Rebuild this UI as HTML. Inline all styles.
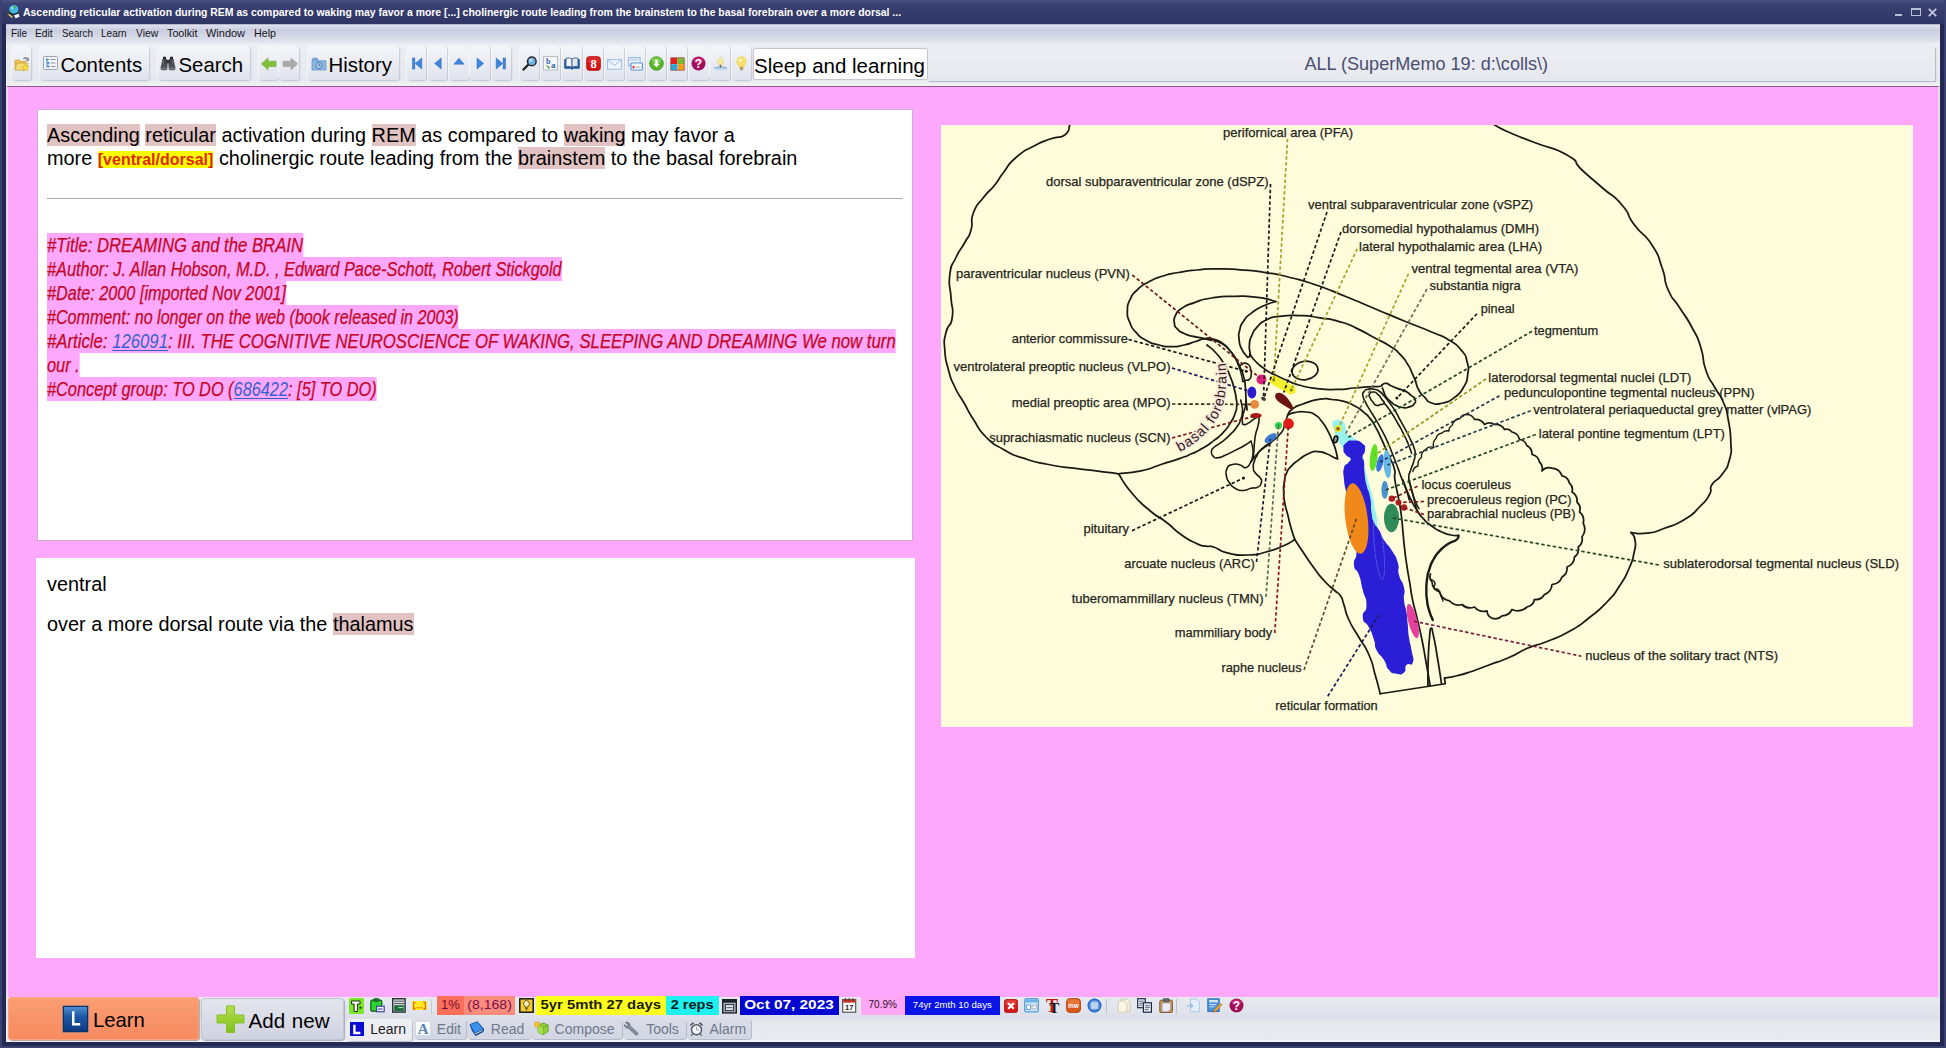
<!DOCTYPE html>
<html>
<head>
<meta charset="utf-8">
<title>SuperMemo</title>
<style>
*{box-sizing:border-box;margin:0;padding:0}
html,body{width:1946px;height:1048px;overflow:hidden}
body{position:relative;background:#242951;font-family:"Liberation Sans",sans-serif;color:#000}
.abs{position:absolute}
#titlebar{left:0;top:0;width:1946px;height:24px;background:linear-gradient(#4c5384 0px,#3b4173 4px,#343a6a 13px,#2f3563 24px)}
#title{left:23px;top:5px;font-size:11.8px;font-weight:bold;color:#fff;white-space:nowrap;transform-origin:0 0;transform:scaleX(0.8847)}
#menubar{left:6px;top:24px;width:1934px;height:19px;background:linear-gradient(#8d92b3 0,#dfe2ee 1px,#c9cdde 6px,#d4d7e5 12px,#e4e6ef 19px)}
#menubar span{position:absolute;top:3px;font-size:11.2px;color:#15151c;white-space:nowrap;transform-origin:0 0}
#toolbar{left:6px;top:43px;width:1934px;height:43px;background:linear-gradient(#eceef3 0,#e6e9f0 36px,#e9ebee 38px,#f2f3f5 43px)}
.tb{position:absolute;top:4px;height:33px;border-radius:3px;background:linear-gradient(#f4f5f9 0,#eceef4 40%,#e0e3ec 100%);box-shadow:1px 1px 1.5px #c3c6d2, -1px -1px 0 #f6f7fa}
.tbt{position:absolute;white-space:nowrap;font-size:20.4px;color:#000;top:11px;line-height:23px}
#client{left:6px;top:86px;width:1934px;height:911px;background:#fea8fd;border-left:2px solid #e6dcee;border-right:2px solid #e6dcee;border-top:1px solid #8a5a8c}
.panel{position:absolute;background:#fff}
#q{left:37px;top:109px;width:876px;height:432px;border:1px solid #cfaad4}
#q>*{margin-left:-1px;margin-top:-1px}
#a{left:36px;top:558px;width:879px;height:400px}
.txt{position:absolute;left:10px;white-space:nowrap;font-size:19.87px;line-height:23.6px}
.hl{background:#e2c3c3}
.cz{background:#ffff00;color:#e02800;font-weight:bold;font-size:16px}
.ref{position:absolute;left:10px;height:24px;line-height:25.4px;font-size:20px;font-style:italic;color:#c40626;-webkit-text-stroke:.25px #c40626;background:#fea8fd;white-space:nowrap;transform-origin:0 0;transform:scaleX(0.816)}
.ref a{color:#3560cc;text-decoration:underline;text-decoration-thickness:1px;text-underline-offset:2px;-webkit-text-stroke:0 transparent}
#imgbox{left:941px;top:125px;width:972px;height:602px;background:#fefcd9}
#bottombar{left:6px;top:997px;width:1934px;height:45px;background:linear-gradient(#e7e9ef 0,#e3e6ed 10px,#dcdfe8 21px,#e6e8f0 25px,#e7eaed 43px,#f2f3fa 43px,#f2f3fa 45px)}
.sx{display:inline-block}
</style>
</head>
<body>
<div id="titlebar" class="abs"></div>
<div class="abs" style="left:0;top:0;width:2px;height:1048px;background:#3a4170"></div>
<div class="abs" style="left:1944px;top:0;width:2px;height:1048px;background:#3a4170"></div>
<div class="abs" style="left:0;top:1046px;width:1946px;height:2px;background:#3a4170"></div>

<div id="title" class="abs">Ascending reticular activation during REM as compared to waking may favor a more [...] cholinergic route leading from the brainstem to the basal forebrain over a more dorsal ...</div>
<svg class="abs" style="left:6px;top:4px" width="16" height="16" viewBox="0 0 16 16"><circle cx="7.8" cy="5.6" r="4.6" fill="#3fb8e8"/><path d="M6 2.2 q2.5 -1 4 .8 q-.5 2 -2 2.4 q-1.6 -.6 -2 -3.2z" fill="#3fae5a"/><path d="M4.2 6.5 q1.4 .4 1.6 2.2 q-1 .6 -1.8 -.4z" fill="#3fae5a"/><circle cx="6.4" cy="4" r="1.3" fill="#bfeaff" opacity=".8"/><path d="M1.5 9.5 L6.5 13.5" stroke="#e8d84a" stroke-width="1.6"/><path d="M1 9 L2.6 10.4" stroke="#444" stroke-width="1.8"/><rect x="8.6" y="10" width="4.6" height="3.6" fill="#f4f6fa" transform="rotate(-25 10.9 11.8)"/><path d="M3 8.5 q4.5 3.5 9.5 0" stroke="#1a1a1a" stroke-width="1.2" fill="none"/></svg>
<div class="abs" style="left:1895px;top:14px;width:6.5px;height:2px;background:#b9bedb"></div>
<div class="abs" style="left:1911px;top:8px;width:9.5px;height:8px;border:1px solid #b9bedb;border-top-width:2px"></div>
<svg class="abs" style="left:1927.5px;top:7.5px" width="9" height="9" viewBox="0 0 9 9"><path d="M.8 .8L8.2 8.2M8.2 .8L.8 8.2" stroke="#c7cbe4" stroke-width="1.7"/></svg>
<div id="menubar" class="abs">
<span style="left:4.5px;transform:scaleX(0.887)">File</span><span style="left:29.0px;transform:scaleX(0.918)">Edit</span><span style="left:55.7px;transform:scaleX(0.869)">Search</span><span style="left:95.0px;transform:scaleX(0.898)">Learn</span><span style="left:129.7px;transform:scaleX(0.927)">View</span><span style="left:161.0px;transform:scaleX(0.962)">Toolkit</span><span style="left:200.0px;transform:scaleX(0.980)">Window</span><span style="left:248.0px;transform:scaleX(0.956)">Help</span>
</div>
<div id="toolbar" class="abs">
<div class="tb" style="left:6.0px;width:19.0px"></div>
<div class="tb" style="left:34.0px;width:109.3px"></div>
<div class="tb" style="left:151.7px;width:92.0px"></div>
<div class="tb" style="left:252.5px;width:19.3px"></div>
<div class="tb" style="left:273.3px;width:20.0px"></div>
<div class="tb" style="left:301.5px;width:91.8px"></div>
<div class="tb" style="left:400.9px;width:19.4px"></div>
<div class="tb" style="left:422.0px;width:19.4px"></div>
<div class="tb" style="left:443.2px;width:19.4px"></div>
<div class="tb" style="left:464.3px;width:19.4px"></div>
<div class="tb" style="left:485.5px;width:19.4px"></div>
<div class="tb" style="left:514.0px;width:19.4px"></div>
<div class="tb" style="left:535.1px;width:19.4px"></div>
<div class="tb" style="left:556.3px;width:19.4px"></div>
<div class="tb" style="left:577.5px;width:19.4px"></div>
<div class="tb" style="left:598.6px;width:19.4px"></div>
<div class="tb" style="left:619.8px;width:19.4px"></div>
<div class="tb" style="left:640.9px;width:19.4px"></div>
<div class="tb" style="left:662.0px;width:19.4px"></div>
<div class="tb" style="left:683.2px;width:19.4px"></div>
<div class="tb" style="left:704.4px;width:19.4px"></div>
<div class="tb" style="left:725.5px;width:19.4px"></div>
<div class="tbt" style="left:54.5px">Contents</div>
<div class="tbt" style="left:172.5px">Search</div>
<div class="tbt" style="left:322.5px">History</div>
<div class="abs" style="left:746.7px;top:5px;width:175px;height:31.5px;background:#fff;border:1px solid #c4c7d2;border-radius:2px"></div>
<div class="tbt" style="left:748px;top:10.6px;font-size:20.5px">Sleep and learning</div>
<div class="abs" style="left:922px;top:4px;width:1007px;height:34px;background:linear-gradient(#eceef3,#e6e8ef);box-shadow:1px 1px 1px #b9bcc8"></div>
<div class="abs" style="left:1298.4px;top:10.6px;font-size:18.1px;color:#4a4f70;white-space:nowrap">ALL (SuperMemo 19: d:\colls\)</div>
<svg class="abs" style="left:8.0px;top:12.0px" width="16" height="17" viewBox="0 0 16 17"><path d="M9 4 C10 1.5 13 1.5 14 3.5 L15 2.5 L15 6 L11.5 6 L12.8 4.6 C12 3.3 10.6 3.4 10 4.6Z" fill="#8d8f96"/>
<path d="M1 5.5 L1 15 L12 15 L12 6.5 L6.5 6.5 L5.5 5 L1.8 5Z" fill="#e9c04a" stroke="#c79a2a" stroke-width=".6"/>
<path d="M1 15 L3.2 8.2 L14 8.2 L12 15Z" fill="#f5d978" stroke="#c79a2a" stroke-width=".5"/>
<path d="M11.5 9.2 L12.5 11.4 L14.9 11.6 L13.1 13.2 L13.7 15.6 L11.5 14.3 L9.3 15.6 L9.9 13.2 L8.1 11.6 L10.5 11.4Z" fill="#ffe83a" stroke="#c9a000" stroke-width=".5"/></svg>
<svg class="abs" style="left:37.0px;top:13.0px" width="15" height="14" viewBox="0 0 15 14"><rect x=".5" y=".5" width="14" height="13" rx="1" fill="#f3f5f9" stroke="#9aa0ad"/>
<path d="M4 3.5v8M4 3.5h2M4 7h2M4 10.5h2" stroke="#4a83c6" stroke-width="1" fill="none"/>
<circle cx="4" cy="3.5" r="1.3" fill="#5b96d8"/><circle cx="5.5" cy="7" r="1.2" fill="#5b96d8"/><circle cx="5.5" cy="10.5" r="1.2" fill="#5b96d8"/>
<path d="M7.5 3.5h5M8 7h4.5M8 10.5h4.5" stroke="#8a8f9c" stroke-width="1.2"/></svg>
<svg class="abs" style="left:154.0px;top:13.0px" width="16" height="15" viewBox="0 0 16 15"><path d="M3 .8h3v2.4h-3zM10 .8h3v2.4h-3z" fill="#26262a"/><path d="M2.4 3h4.4l.9 7.2h-6.6zM9.2 3h4.4l1.3 7.2h-6.6z" fill="#45464c"/><rect x="6.4" y="3.8" width="3.2" height="3.6" fill="#2e2e33"/><rect x=".6" y="9.6" width="6.8" height="4.6" rx="1.4" fill="#55565d"/><rect x="8.6" y="9.6" width="6.8" height="4.6" rx="1.4" fill="#55565d"/><path d="M1.4 12.6h5.2M9.4 12.6h5.2" stroke="#8c8d94" stroke-width=".9"/><path d="M3.4 4.4v4.4M12.6 4.4v4.4" stroke="#77787f" stroke-width=".8"/></svg>
<svg class="abs" style="left:255.0px;top:13.5px" width="16" height="14" viewBox="0 0 16 14"><path d="M0.5 6.8 L7 1 L7 4.2 L15 4.2 L15 9.6 L7 9.6 L7 12.8Z" fill="#7fbf3a" stroke="#6aa82c" stroke-width=".6"/></svg>
<svg class="abs" style="left:276.0px;top:13.5px" width="16" height="14" viewBox="0 0 16 14"><path d="M15.5 6.8 L9 1 L9 4.2 L1 4.2 L1 9.6 L9 9.6 L9 12.8Z" fill="#a9a9a9" stroke="#9c9c9c" stroke-width=".6"/></svg>
<svg class="abs" style="left:304.5px;top:13.5px" width="16" height="14" viewBox="0 0 16 14"><path d="M1 3 L1 13 L15 13 L15 3.8 L7.5 3.8 L6.3 1.2 L2 1.2Z" fill="#7aa7d6" stroke="#5c8cc0" stroke-width=".7"/>
<rect x="1.4" y="4.6" width="13.2" height="8" fill="#8db7e2"/>
<circle cx="8" cy="8.5" r="3.2" fill="#a9cbee" stroke="#4c79ad" stroke-width=".9"/><path d="M8 6.6v2h1.6" stroke="#3d6596" stroke-width=".9" fill="none"/></svg>
<svg class="abs" style="left:404.6px;top:14.0px" width="12" height="13" viewBox="0 0 12 13"><rect x="1.5" y="1" width="2.4" height="11" fill="#3f86dc" stroke="#2a66b8" stroke-width=".5"/><path d="M10.8 1 L10.8 12 L4.2 6.5Z" fill="#3f86dc" stroke="#2a66b8" stroke-width=".5"/></svg>
<svg class="abs" style="left:425.7px;top:14.0px" width="12" height="13" viewBox="0 0 12 13"><path d="M9.2 1 L9.2 12 L2.6 6.5Z" fill="#3f86dc" stroke="#2a66b8" stroke-width=".5"/></svg>
<svg class="abs" style="left:446.9px;top:14.0px" width="12" height="13" viewBox="0 0 12 13"><path d="M0.8 7.2 L11.2 7.2 L6 1.2Z" fill="#3f86dc" stroke="#2a66b8" stroke-width=".5"/></svg>
<svg class="abs" style="left:468.0px;top:14.0px" width="12" height="13" viewBox="0 0 12 13"><path d="M3 1 L3 12 L9.6 6.5Z" fill="#3f86dc" stroke="#2a66b8" stroke-width=".5"/></svg>
<svg class="abs" style="left:489.2px;top:14.0px" width="12" height="13" viewBox="0 0 12 13"><rect x="8.1" y="1" width="2.4" height="11" fill="#3f86dc" stroke="#2a66b8" stroke-width=".5"/><path d="M1.2 1 L1.2 12 L7.8 6.5Z" fill="#3f86dc" stroke="#2a66b8" stroke-width=".5"/></svg>
<svg class="abs" style="left:515.7px;top:13.0px" width="16" height="15" viewBox="0 0 16 15"><path d="M1.5 13.5 L6.5 8.5" stroke="#222" stroke-width="2.4" stroke-linecap="round"/><circle cx="9.8" cy="5.4" r="4.3" fill="#6fb4ea" stroke="#2c2c30" stroke-width="1.5"/><circle cx="8.8" cy="4.3" r="1.6" fill="#b9defa"/></svg>
<svg class="abs" style="left:537.4px;top:13.0px" width="15" height="15" viewBox="0 0 15 15"><rect x=".5" y=".5" width="14" height="13.5" fill="#f6f7f4" stroke="#b8bcc4"/><text x="3" y="7.5" font-family="Liberation Serif" font-weight="bold" font-size="8" fill="#2a68b8">b</text><text x="8" y="12" font-family="Liberation Serif" font-weight="bold" font-size="9" fill="#2a68b8">a</text><path d="M3.5 9 q0 2.5 3 2.5 M5.2 10 l1.5 1.5 l-1.6 1.2" stroke="#3d9a3d" stroke-width=".9" fill="none"/></svg>
<svg class="abs" style="left:558.0px;top:14.0px" width="16" height="13" viewBox="0 0 16 13"><path d="M.8 2.2 L.8 11.2 L6.6 11.2 L8 12.4 L9.4 11.2 L15.2 11.2 L15.2 2.2" fill="#2a66a8" stroke="#1f4f8a" stroke-width="1"/><path d="M2 1.2 Q5.4 .2 8 2 L8 10.2 Q5.4 8.8 2 9.8Z" fill="#f2f5f8" stroke="#1f4f8a" stroke-width=".8"/><path d="M14 1.2 Q10.6 .2 8 2 L8 10.2 Q10.6 8.8 14 9.8Z" fill="#dfe6ee" stroke="#1f4f8a" stroke-width=".8"/></svg>
<svg class="abs" style="left:579.7px;top:13.0px" width="15" height="15" viewBox="0 0 15 15"><rect x=".5" y=".5" width="14" height="14" rx="3" fill="#d41414" stroke="#a90c0c" stroke-width=".6"/><rect x="1.5" y="1.2" width="12" height="6" rx="2.5" fill="#e63a3a" opacity=".55"/><text x="7.5" y="11.6" text-anchor="middle" font-family="Liberation Serif" font-weight="bold" font-size="12.5" fill="#fff">8</text></svg>
<svg class="abs" style="left:600.8px;top:15.5px" width="15" height="11" viewBox="0 0 15 11"><rect x=".6" y=".6" width="13.8" height="9.6" fill="#eef4fb" stroke="#9dbde2" stroke-width="1"/><path d="M1 1 L7.5 6.4 L14 1" fill="none" stroke="#9dbde2" stroke-width="1"/></svg>
<svg class="abs" style="left:622.0px;top:13.5px" width="15" height="14" viewBox="0 0 15 14"><rect x=".6" y=".6" width="11.5" height="8" fill="#e8f1fb" stroke="#8fb6e3" stroke-width="1"/><path d="M2 3.5l2-1.5 2 1.5 2-1.5 2 1.5" stroke="#8fb6e3" stroke-width=".8" fill="none"/><rect x="3" y="6" width="11.4" height="7" rx="1" fill="#fdfdfd" stroke="#5a96d6" stroke-width="1.2"/><rect x="4.5" y="9" width="2" height="2.4" fill="#d03030"/><path d="M7.5 10.2h5" stroke="#9aa" stroke-width="1"/></svg>
<svg class="abs" style="left:643.1px;top:13.0px" width="15" height="15" viewBox="0 0 15 15"><circle cx="7.5" cy="7.5" r="6.8" fill="#56b52a" stroke="#3c9418" stroke-width=".8"/><ellipse cx="7.5" cy="4.6" rx="4.8" ry="3" fill="#8ad862" opacity=".7"/><path d="M6.2 3.8h2.6v4h2L7.5 11.6 4.2 7.8h2z" fill="#fff"/></svg>
<svg class="abs" style="left:664.2px;top:13.5px" width="15" height="14" viewBox="0 0 15 14"><rect x=".8" y=".8" width="6.6" height="6.2" fill="#e02020"/><rect x="7.6" y=".8" width="6.6" height="6.2" fill="#7cba2c"/><rect x=".8" y="7.2" width="6.6" height="6" fill="#2aa6d8"/><rect x="7.6" y="7.2" width="6.6" height="6" fill="#f49a1a"/><rect x=".8" y=".8" width="13.4" height="12.4" fill="none" stroke="#8a3a2a" stroke-width=".6"/></svg>
<svg class="abs" style="left:685.4px;top:13.0px" width="15" height="15" viewBox="0 0 15 15"><circle cx="7.5" cy="7.5" r="7" fill="#a0105a"/><ellipse cx="7.5" cy="4.4" rx="5" ry="3.1" fill="#d02a7c" opacity=".75"/><text x="7.5" y="12" text-anchor="middle" font-family="Liberation Sans" font-weight="bold" font-size="12" fill="#fff">?</text></svg>
<svg class="abs" style="left:706.6px;top:13.0px" width="15" height="15" viewBox="0 0 15 15"><ellipse cx="7.5" cy="12.3" rx="7" ry="2" fill="#bcd6ef"/><path d="M1 12 q6.5 -3 13 0" stroke="#7fb0de" stroke-width="1" fill="none"/><path d="M7.5 .8 L10.4 4.5 q.8 3 -1.4 4.3 L6 8.8 q-2.2 -1.3 -1.4 -4.3z" fill="#f5eaa0" stroke="#d8c870" stroke-width=".5"/><rect x="6.8" y="8.8" width="1.4" height="3" fill="#7a6a3a"/></svg>
<svg class="abs" style="left:727.7px;top:13.0px" width="15" height="15" viewBox="0 0 15 15"><path d="M7.5 .8 a4.8 4.8 0 0 1 3 8.5 l-.6 1.6 h-4.8 l-.6 -1.6 a4.8 4.8 0 0 1 3 -8.5z" fill="#f7df6a" stroke="#e8c84a" stroke-width=".5"/><circle cx="6.3" cy="4.2" r="1.8" fill="#fdf3b5"/><rect x="5.8" y="10.9" width="3.4" height="2.4" fill="#b99a4a"/><rect x="6.5" y="13.3" width="2" height="1" fill="#8a7a4a"/></svg>
</div>
<div id="client" class="abs"></div>
<div id="q" class="panel">
<div class="txt" style="top:14.5px"><span class="hl">Ascending</span> <span class="hl">reticular</span> activation during <span class="hl">REM</span> as compared to <span class="hl">waking</span> may favor a</div>
<div class="txt" style="top:38px">more <span class="cz">[ventral/dorsal]</span> cholinergic route leading from the <span class="hl">brainstem</span> to the basal forebrain</div>
<div class="abs" style="left:10px;top:89px;width:856px;height:1px;background:#a8a8a8"></div>
<div class="ref" style="top:124px;transform:scaleX(0.835)">#Title: DREAMING and the BRAIN</div>
<div class="ref" style="top:148px">#Author: J. Allan Hobson, M.D. , Edward Pace-Schott, Robert Stickgold</div>
<div class="ref" style="top:172px;transform:scaleX(0.811)">#Date: 2000 [imported Nov 2001]</div>
<div class="ref" style="top:196px;transform:scaleX(0.805)">#Comment: no longer on the web (book released in 2003)</div>
<div class="ref" style="top:220px;transform:scaleX(0.837)">#Article: <a>126091</a>: III. THE COGNITIVE NEUROSCIENCE OF WAKING, SLEEPING AND DREAMING We now turn</div>
<div class="ref" style="top:244px">our .</div>
<div class="ref" style="top:268px">#Concept group: TO DO (<a>686422</a>: [5] TO DO)</div>
</div>
<div id="a" class="panel">
<div class="txt" style="top:14.5px;left:11px">ventral</div>
<div class="txt" style="top:54.5px;left:11px">over a more dorsal route via the <span class="hl">thalamus</span></div>
</div>
<!--BRAIN--><svg class="abs" style="left:941px;top:125px" width="972" height="602" viewBox="941 125 972 602">
<rect x="941" y="125" width="972" height="602" fill="#fefcda"/>
<g fill="none" stroke="#1a1a14" stroke-width="1.75" stroke-linecap="round" stroke-linejoin="round">
<path d="M1069.8 125.0C1068.1 128.3 1071.0 130.4 1064.8 135.0C1058.5 139.6 1061.4 135.0 1051.0 138.8C1040.6 142.5 1045.2 140.0 1033.5 146.2C1021.8 152.5 1026.0 148.8 1016.0 157.5C1006.0 166.2 1010.6 163.3 1003.5 172.5C996.4 181.7 1001.4 176.7 994.8 185.0C988.1 193.3 990.6 188.3 983.5 197.5C976.4 206.7 977.7 201.7 973.5 212.5C969.3 223.3 973.9 220.0 971.0 230.0C968.1 240.0 969.8 233.3 964.8 242.5C959.8 251.7 961.0 246.7 956.0 257.5C951.0 268.3 951.4 261.7 949.8 275.0C948.1 288.3 950.2 283.3 951.0 297.5C951.8 311.7 953.9 305.8 952.2 317.5C950.6 329.2 948.5 321.7 946.0 332.5C943.5 343.3 943.9 337.5 944.8 350.0C945.6 362.5 945.2 357.7 948.5 370.0C951.8 382.3 949.8 376.3 954.8 387.0C959.8 397.7 957.2 391.2 963.5 402.0C969.8 412.8 966.0 407.8 973.5 419.5C981.0 431.2 976.0 427.0 986.0 437.0C996.0 447.0 991.0 442.4 1003.5 449.5C1016.0 456.6 1008.5 453.2 1023.5 458.2C1038.5 463.2 1031.8 461.2 1048.5 464.5C1065.2 467.8 1057.7 466.2 1073.5 468.2C1089.3 470.3 1081.0 468.9 1096.0 470.8C1111.0 472.6 1111.0 472.8 1118.5 473.8"/>
<path d="M1118.5 473.8C1126.0 472.8 1126.8 473.8 1141.0 470.8C1155.2 467.7 1148.0 468.6 1161.0 464.5C1174.0 460.4 1169.8 462.0 1180.0 458.4C1190.2 454.8 1183.9 457.2 1191.5 453.8C1199.1 450.4 1195.3 452.7 1202.9 448.1C1210.5 443.5 1207.5 445.4 1214.4 440.1C1221.3 434.8 1218.2 437.8 1223.5 432.1C1228.8 426.4 1226.6 429.0 1230.4 422.9C1234.2 416.8 1232.9 419.4 1235.0 413.7C1237.1 408.0 1236.3 410.9 1236.7 405.7C1237.1 400.5 1237.0 403.9 1236.1 398.0C1235.2 392.1 1236.0 395.3 1234.0 388.0C1232.0 380.7 1233.3 384.0 1230.0 376.0C1226.7 368.0 1228.7 371.7 1224.0 364.0C1219.3 356.3 1221.7 359.3 1216.0 353.0C1210.3 346.7 1210.0 347.7 1207.0 345.0"/>
<path d="M1118.5 473.8C1122.7 479.8 1121.0 480.1 1131.0 492.0C1141.0 503.9 1136.8 499.5 1148.5 509.5C1160.2 519.5 1155.2 513.7 1166.0 522.0C1176.8 530.3 1171.0 527.4 1181.0 534.5C1191.0 541.6 1187.7 539.3 1196.0 543.2C1204.3 547.2 1200.2 545.0 1206.0 546.2C1211.8 547.5 1206.0 544.7 1213.5 547.0C1221.0 549.3 1216.8 550.6 1228.5 553.2C1240.2 555.9 1236.0 555.4 1248.5 555.0C1261.0 554.6 1254.3 555.1 1266.0 552.0C1277.7 548.9 1273.9 549.9 1283.5 545.8C1293.1 541.6 1291.0 541.6 1294.8 539.5"/>
<path d="M1494.5 125.0C1499.5 127.5 1496.2 126.7 1509.5 132.5C1522.8 138.3 1515.3 135.0 1534.5 142.5C1553.7 150.0 1551.2 145.8 1567.0 155.0C1582.8 164.2 1570.3 159.2 1582.0 170.0C1593.7 180.8 1588.7 175.8 1602.0 187.5C1615.3 199.2 1611.2 192.5 1622.0 205.0C1632.8 217.5 1624.5 211.7 1634.5 225.0C1644.5 238.3 1642.8 230.8 1652.0 245.0C1661.2 259.2 1656.6 252.5 1662.0 267.5C1667.4 282.5 1662.4 276.7 1668.2 290.0C1674.1 303.3 1671.6 295.0 1679.5 307.5C1687.4 320.0 1684.9 314.2 1692.0 327.5C1699.1 340.8 1696.2 333.3 1700.8 347.5C1705.3 361.7 1701.2 356.8 1705.8 370.0C1710.3 383.2 1708.7 376.3 1714.5 387.0C1720.3 397.7 1718.7 391.2 1723.2 402.0C1727.8 412.8 1725.8 406.2 1728.2 419.5C1730.8 432.8 1730.3 428.7 1730.8 442.0C1731.2 455.3 1732.4 448.7 1729.5 459.5C1726.6 470.3 1727.8 466.2 1722.0 474.5C1716.2 482.8 1716.2 477.8 1712.0 484.5C1707.8 491.2 1713.7 487.0 1709.5 494.5C1705.3 502.0 1707.8 498.7 1699.5 507.0C1691.2 515.3 1696.2 512.4 1684.5 519.5C1672.8 526.6 1677.0 523.7 1664.5 528.2C1652.0 532.8 1658.2 531.8 1647.0 533.2C1635.8 534.7 1636.3 532.8 1631.0 532.5"/>
<path d="M1631.0 532.5C1632.3 535.0 1634.0 533.2 1635.0 540.0C1636.0 546.8 1636.0 543.5 1634.0 553.0C1632.0 562.5 1633.8 557.5 1629.0 568.5C1624.2 579.5 1626.8 574.8 1619.5 586.0C1612.2 597.2 1617.0 591.5 1607.0 602.0C1597.0 612.5 1601.8 607.8 1589.5 617.5C1577.2 627.2 1584.2 623.0 1570.0 631.0C1555.8 639.0 1561.0 635.8 1547.0 641.5C1533.0 647.2 1540.7 642.7 1528.0 648.0C1515.3 653.3 1522.0 651.8 1509.0 657.5C1496.0 663.2 1501.5 660.3 1489.0 665.0C1476.5 669.7 1482.5 667.8 1471.5 671.5C1460.5 675.2 1465.0 673.8 1456.0 676.0C1447.0 678.2 1448.3 677.3 1444.5 678.0"/>
<path d="M1467.0 414.5Q1472.3 414.6 1474.5 419.5Q1481.1 418.8 1484.5 424.5Q1489.5 421.3 1494.5 424.5Q1501.1 423.8 1504.5 429.5Q1509.0 428.4 1512.0 432.0Q1518.2 433.4 1519.5 439.5Q1525.2 440.2 1527.0 445.8Q1532.3 448.5 1532.0 454.5Q1538.2 455.9 1539.5 462.0Q1543.5 465.6 1542.0 470.8Q1546.2 466.3 1552.0 468.2Q1559.4 468.8 1562.0 475.8Q1568.2 477.1 1569.5 483.2Q1573.5 486.8 1572.0 492.0Q1577.7 495.4 1577.0 502.0Q1581.5 506.2 1579.5 512.0Q1585.0 516.4 1583.2 523.2Q1587.0 530.5 1582.0 537.0Q1583.3 543.2 1578.2 547.0Q1579.6 553.2 1574.5 557.0Q1574.0 564.4 1567.0 567.0Q1567.7 573.6 1562.0 577.0Q1559.4 584.0 1552.0 584.5Q1551.5 591.9 1544.5 594.5Q1541.1 600.2 1534.5 599.5Q1533.2 605.6 1527.0 607.0Q1520.3 613.0 1512.0 609.5Q1509.0 615.8 1502.0 615.8Q1497.8 620.2 1492.0 618.2Q1487.1 616.1 1487.0 610.8Q1479.5 612.9 1474.5 607.0Q1467.5 609.8 1462.0 604.5Q1454.5 606.6 1449.5 600.8Q1441.7 599.6 1439.5 592.0Q1432.5 589.4 1432.0 582.0Q1428.7 578.5 1430.5 574.0"/>
<path d="M1287.7 414.9C1290.0 414.1 1288.4 413.6 1294.5 412.6C1300.6 411.6 1299.1 411.2 1306.0 412.0C1312.9 412.8 1309.9 411.6 1315.2 414.9C1320.5 418.2 1317.8 416.5 1322.0 421.8C1326.2 427.1 1324.3 424.4 1327.8 430.9C1331.3 437.4 1329.7 434.7 1332.4 441.2C1335.1 447.7 1334.1 444.5 1335.8 450.4C1337.5 456.3 1336.9 456.0 1337.5 458.8"/>
<path d="M1337.5 458.8C1336.2 458.3 1337.1 459.0 1333.5 457.3C1329.9 455.6 1331.9 455.7 1326.6 453.8C1321.3 451.9 1323.6 451.5 1317.5 451.5C1311.4 451.5 1314.4 451.1 1308.3 453.8C1302.2 456.5 1304.8 455.4 1299.1 459.6C1293.4 463.8 1295.3 461.8 1291.1 466.4C1286.9 471.0 1288.8 467.9 1286.5 473.3C1284.2 478.7 1285.1 476.4 1284.2 482.5C1283.3 488.6 1283.5 484.7 1283.7 491.6C1283.9 498.5 1283.5 495.5 1284.8 503.1C1286.1 510.7 1285.8 506.9 1287.7 514.5C1289.6 522.1 1288.2 517.7 1290.5 526.0C1292.8 534.3 1293.3 535.0 1294.8 539.5"/>
<path d="M1294.8 539.5C1297.8 544.2 1297.6 544.0 1304.0 553.5C1310.4 563.0 1307.3 559.0 1314.0 568.0C1320.7 577.0 1317.3 573.2 1324.0 580.5C1330.7 587.8 1328.6 585.0 1334.0 590.0C1339.4 595.0 1336.9 590.5 1340.2 595.5C1343.6 600.5 1341.1 596.8 1344.0 605.0C1346.9 613.2 1344.0 609.2 1349.0 620.0C1354.0 630.8 1352.3 625.8 1359.0 637.5C1365.7 649.2 1363.6 642.5 1369.0 655.0C1374.4 667.5 1371.5 662.1 1375.2 675.0C1379.0 687.9 1378.6 687.5 1380.2 693.8"/>
<path d="M1380.25 693.75 L1445.25 683.75 L1444.5 678"/>
<path d="M1287.7 414.9C1289.3 412.9 1287.4 412.6 1292.5 409.0C1297.6 405.4 1293.8 407.3 1303.0 404.0C1312.2 400.7 1310.5 400.7 1320.0 399.2C1329.5 397.7 1323.9 398.8 1331.5 399.5C1339.1 400.2 1335.3 399.1 1342.9 401.2C1350.5 403.3 1347.5 402.2 1354.4 405.8C1361.3 409.4 1358.2 407.7 1363.5 412.1C1368.8 416.5 1366.2 413.6 1370.4 418.9C1374.6 424.2 1372.7 422.0 1376.1 428.1C1379.5 434.2 1377.6 430.8 1380.7 437.3C1383.8 443.8 1382.2 440.7 1385.3 447.6C1388.4 454.5 1386.8 450.7 1389.9 457.9C1393.0 465.1 1392.8 461.9 1394.5 469.3C1396.2 476.7 1393.6 470.7 1394.9 480.0C1396.2 489.3 1396.2 485.7 1398.3 497.2C1400.4 508.7 1399.7 503.0 1401.2 514.4C1402.7 525.8 1401.8 520.1 1402.9 531.5C1404.0 542.9 1403.3 537.2 1404.6 548.7C1405.9 560.2 1405.2 554.4 1406.9 565.9C1408.6 577.4 1407.9 571.7 1409.8 583.1C1411.7 594.5 1410.2 588.4 1412.6 600.0C1415.0 611.6 1413.9 604.7 1417.0 618.0C1420.1 631.3 1419.0 625.3 1422.0 640.0C1425.0 654.7 1423.2 646.7 1426.0 662.0C1428.8 677.3 1428.8 678.0 1430.2 686.0"/>
<path d="M1409.3 500.0C1408.2 496.3 1408.6 496.3 1405.9 488.8C1403.2 481.3 1404.4 485.4 1401.3 477.4C1398.2 469.4 1399.7 472.8 1396.7 464.8C1393.7 456.8 1395.2 460.9 1392.2 453.3C1389.2 445.7 1391.0 449.5 1387.6 441.9C1384.2 434.3 1385.7 437.7 1381.9 430.4C1378.1 423.1 1379.9 426.6 1376.1 420.1C1372.3 413.6 1373.8 416.6 1370.4 410.9C1367.0 405.2 1368.3 407.9 1365.8 402.9C1363.3 397.9 1363.6 399.8 1363.0 396.0C1362.4 392.2 1362.4 393.8 1364.1 391.5C1365.8 389.2 1364.9 390.0 1368.1 389.2C1371.3 388.4 1370.0 388.4 1373.8 389.2C1377.6 390.0 1376.2 389.2 1379.6 391.5C1383.0 393.8 1381.1 392.6 1384.1 396.0C1387.1 399.4 1385.2 397.2 1388.7 401.8C1392.2 406.4 1390.7 403.7 1394.5 409.8C1398.3 415.9 1396.4 413.2 1400.2 420.1C1404.0 427.0 1402.5 423.9 1405.9 430.4C1409.3 436.9 1407.8 433.9 1410.5 439.6C1413.2 445.3 1412.4 442.6 1413.9 447.6C1415.4 452.6 1415.3 449.5 1415.1 454.5C1414.9 459.5 1414.9 457.2 1413.4 462.5C1411.9 467.8 1412.0 465.5 1410.5 470.5C1409.0 475.5 1408.8 472.4 1408.8 477.4C1408.8 482.4 1409.2 479.7 1410.5 485.4C1411.8 491.1 1410.7 486.5 1412.8 494.6C1414.9 502.7 1415.4 504.7 1416.7 509.8" stroke-width="1.6"/>
<path d="M1369.3 394.3C1370.4 392.2 1370.8 391.8 1373.8 392.0C1376.8 392.2 1375.7 392.4 1378.4 394.9C1381.1 397.4 1380.0 396.8 1381.9 399.5C1383.8 402.2 1384.5 401.2 1384.1 402.9C1383.7 404.6 1383.4 403.8 1380.7 404.6C1378.0 405.4 1378.8 406.1 1376.1 405.2C1373.4 404.3 1374.6 404.1 1372.7 401.8C1370.8 399.5 1371.5 400.8 1370.4 398.3C1369.3 395.8 1368.2 396.4 1369.3 394.3Z" stroke-width="1.6"/>
<path d="M1384.1 402.9C1386.4 405.9 1386.4 405.1 1391.0 412.0C1395.6 418.9 1393.7 416.2 1397.9 423.5C1402.1 430.8 1400.2 427.2 1403.6 434.0C1407.0 440.8 1405.5 437.6 1408.2 444.0C1410.9 450.4 1410.5 450.2 1411.6 453.3" stroke-width="1.6"/>
<path d="M1427.9 686.2C1428.0 677.5 1427.7 676.1 1428.2 660.0C1428.7 643.9 1428.6 648.5 1429.5 638.0C1430.4 627.5 1429.7 629.2 1431.0 628.5C1432.3 627.8 1431.5 627.2 1433.5 636.0C1435.5 644.8 1434.3 639.2 1437.0 655.0C1439.7 670.8 1440.0 674.0 1441.5 683.5"/>
<path d="M1402.9 480.0C1404.0 483.1 1403.6 482.7 1406.3 489.2C1409.0 495.7 1407.4 492.6 1410.9 499.5C1414.4 506.4 1412.5 503.3 1416.7 509.8C1420.9 516.3 1418.6 513.6 1423.5 518.9C1428.4 524.2 1425.8 521.6 1431.5 525.8C1437.2 530.0 1434.2 528.4 1440.7 531.5C1447.2 534.6 1445.1 533.6 1451.0 535.0C1456.9 536.4 1456.0 535.4 1458.5 535.6"/>
<path d="M1458.5 535.6C1457.9 536.9 1460.0 536.9 1456.7 539.6C1453.4 542.3 1454.0 540.2 1448.7 543.6C1443.4 547.0 1445.7 544.8 1440.7 549.9C1435.7 555.0 1437.6 552.5 1433.8 559.0C1430.0 565.5 1431.6 562.4 1429.3 569.3C1427.0 576.2 1428.0 572.8 1427.0 579.7C1426.0 586.6 1426.4 583.2 1426.4 590.0C1426.4 596.8 1426.1 593.3 1427.0 600.0C1427.9 606.7 1427.1 603.3 1429.0 610.0C1430.9 616.7 1431.5 616.7 1432.8 620.0" stroke-width="2.4"/>
<path d="M1408.6 480.0C1409.8 483.8 1409.8 484.2 1412.1 491.5C1414.4 498.8 1413.2 496.1 1415.5 501.8C1417.8 507.5 1417.8 506.3 1419.0 508.6" stroke-width="1.6"/>
<path d="M1467.0 414.5Q1462.2 414.3 1460.0 418.5Q1453.8 419.4 1452.0 425.5Q1448.7 427.3 1449.0 431.0Q1444.9 429.8 1442.0 433.0Q1437.2 433.8 1436.0 438.5Q1432.0 442.3 1433.8 447.5Q1429.4 445.8 1426.0 449.0Q1421.0 451.8 1421.5 457.5Q1417.0 460.6 1418.0 466.0Q1413.6 467.1 1412.8 471.6" stroke-width="1.4"/>
<path d="M1431.5 579.6C1432.7 580.7 1434.2 580.0 1435.0 583.0C1435.8 586.0 1432.8 586.2 1434.0 588.5C1435.2 590.8 1436.2 587.5 1438.5 590.0C1440.8 592.5 1439.5 592.3 1441.0 596.0C1442.5 599.7 1442.3 599.3 1443.0 601.0" stroke-width="1.4"/>
<path d="M1247.1 410.0C1246.7 406.3 1246.6 406.3 1246.0 398.8C1245.4 391.3 1246.2 394.6 1245.4 387.4C1244.6 380.2 1245.4 383.6 1243.7 377.1C1242.0 370.6 1243.0 374.0 1240.3 367.9C1237.6 361.8 1239.1 364.4 1235.7 358.7C1232.3 353.0 1234.2 355.7 1230.0 350.7C1225.8 345.7 1228.5 347.6 1223.1 343.8C1217.7 340.0 1220.0 341.0 1213.9 339.3C1207.8 337.6 1210.9 338.0 1204.8 338.7C1198.7 339.4 1202.5 339.4 1195.6 341.5C1188.7 343.6 1192.1 343.3 1184.1 345.0C1176.1 346.7 1179.9 346.7 1171.5 346.7C1163.1 346.7 1167.3 347.1 1158.9 345.0C1150.5 342.9 1153.9 344.6 1146.3 340.4C1138.7 336.2 1141.5 338.5 1136.0 332.4C1130.5 326.3 1132.6 329.4 1129.7 322.1C1126.8 314.8 1127.2 318.2 1127.4 310.6C1127.6 303.0 1127.0 306.1 1130.3 299.2C1133.6 292.3 1131.1 295.7 1137.2 290.0C1143.3 284.3 1139.9 286.7 1148.5 282.0C1157.1 277.3 1153.0 279.2 1163.0 276.0C1173.0 272.8 1167.2 274.5 1178.5 272.5C1189.8 270.5 1184.5 271.2 1197.0 270.0C1209.5 268.8 1201.7 269.0 1216.0 268.9C1230.3 268.8 1223.3 268.6 1240.0 269.8C1256.7 271.0 1249.3 270.0 1266.0 272.6C1282.7 275.2 1273.3 273.4 1290.0 277.5C1306.7 281.6 1297.4 278.7 1316.0 285.0C1334.6 291.3 1326.2 288.7 1345.7 296.5C1365.2 304.3 1355.3 300.5 1374.4 308.5C1393.5 316.5 1383.9 312.7 1403.0 320.5C1422.1 328.3 1416.3 325.5 1431.6 332.0C1446.9 338.5 1438.9 333.9 1448.8 340.0C1458.7 346.1 1455.3 343.1 1461.4 350.4C1467.5 357.7 1465.0 353.9 1467.1 361.9C1469.2 369.9 1468.8 366.1 1467.7 374.5C1466.6 382.9 1468.1 379.4 1463.7 387.0C1459.3 394.6 1461.4 392.1 1454.5 397.4C1447.6 402.7 1450.6 401.1 1443.0 403.0C1435.4 404.9 1437.7 404.9 1431.6 403.0C1425.5 401.1 1429.0 401.6 1424.8 397.4C1420.6 393.2 1422.1 395.9 1419.0 390.5C1415.9 385.1 1416.7 384.4 1415.6 381.3"/>
<path d="M1207.0 338.0C1210.5 339.2 1210.9 338.4 1217.4 341.5C1223.9 344.6 1221.2 342.7 1226.5 347.3C1231.8 351.9 1229.6 349.6 1233.4 355.3C1237.2 361.0 1235.3 358.0 1238.0 364.5C1240.7 371.0 1239.9 369.1 1241.4 374.8C1242.9 380.5 1242.2 379.3 1242.6 381.6" stroke-width="1.4"/>
<path d="M1275.8 301.5C1269.7 300.1 1271.3 299.1 1257.5 297.4C1243.7 295.7 1249.8 296.1 1234.5 296.3C1219.2 296.5 1224.9 295.9 1211.6 298.0C1198.3 300.1 1204.4 299.2 1194.5 302.6C1184.6 306.0 1188.2 304.1 1181.9 308.3C1175.6 312.5 1178.1 310.2 1175.6 315.2C1173.1 320.2 1173.8 318.6 1174.4 323.2C1175.0 327.8 1174.1 325.5 1177.3 328.9C1180.5 332.3 1178.8 331.0 1184.1 333.5C1189.4 336.0 1187.2 334.9 1193.3 336.4C1199.4 337.9 1196.4 336.8 1202.5 338.1C1208.6 339.4 1208.6 339.6 1211.6 340.4"/>
<path d="M1275.8 301.5C1271.6 303.0 1271.2 302.2 1263.2 306.0C1255.2 309.8 1258.2 307.9 1251.7 312.9C1245.2 317.9 1247.7 315.2 1243.7 320.9C1239.7 326.6 1241.2 324.0 1239.7 330.1C1238.2 336.2 1238.5 333.2 1239.1 339.3C1239.7 345.4 1239.1 343.1 1241.4 348.4C1243.7 353.7 1243.7 352.4 1246.0 355.3C1248.3 358.2 1247.0 357.4 1248.3 357.0C1249.6 356.6 1249.6 358.1 1250.0 354.1C1250.4 350.1 1248.8 351.1 1249.4 345.0C1250.0 338.9 1249.0 341.9 1251.7 335.8C1254.4 329.7 1252.5 332.0 1257.5 326.7C1262.5 321.4 1259.1 323.3 1266.6 319.8C1274.1 316.3 1268.9 317.7 1280.0 316.3C1291.1 314.9 1286.7 315.1 1300.0 315.6C1313.3 316.1 1306.7 315.7 1320.0 317.8C1333.3 319.9 1327.6 318.2 1340.0 321.8C1352.4 325.4 1345.7 323.3 1357.2 328.6C1368.7 333.9 1363.7 332.1 1374.4 337.8C1385.1 343.5 1380.9 340.5 1389.3 345.8C1397.7 351.1 1393.5 347.7 1399.6 353.8C1405.7 359.9 1403.4 357.6 1407.6 364.1C1411.8 370.6 1409.5 367.6 1412.2 373.3C1414.9 379.0 1414.5 378.6 1415.6 381.3"/>
<path d="M1250.0 354.1C1251.7 356.4 1250.8 356.4 1255.2 361.0C1259.6 365.6 1257.5 363.7 1263.2 367.9C1268.9 372.1 1264.6 369.6 1272.3 373.6C1280.0 377.6 1277.4 376.2 1286.2 380.0C1295.1 383.8 1288.3 382.1 1298.8 385.0C1309.2 387.9 1304.7 387.1 1317.5 388.6C1330.3 390.1 1324.9 389.6 1337.2 389.4C1349.5 389.2 1344.1 388.8 1354.4 388.0C1364.7 387.2 1359.7 387.5 1368.1 386.9C1376.5 386.3 1374.8 387.1 1379.6 386.3C1384.4 385.5 1380.1 385.6 1382.4 384.6C1384.7 383.6 1383.5 383.0 1386.4 383.4C1389.3 383.8 1387.2 384.0 1391.0 385.7C1394.8 387.4 1393.3 386.9 1397.9 388.6C1402.5 390.3 1400.6 388.8 1404.8 390.9C1409.0 393.0 1407.1 392.0 1410.5 394.9C1413.9 397.8 1414.0 396.4 1415.1 399.5C1416.2 402.6 1415.8 401.6 1413.9 404.1C1412.0 406.6 1413.1 405.8 1409.3 406.9C1405.5 408.0 1407.1 408.1 1402.5 407.5C1397.9 406.9 1399.4 407.1 1395.6 405.2C1391.8 403.3 1394.1 404.5 1391.0 401.8C1387.9 399.1 1388.7 400.3 1386.4 397.2C1384.1 394.1 1385.4 395.7 1384.1 392.6C1382.8 389.5 1383.0 389.5 1382.4 388.0"/>
<ellipse cx="1305" cy="370.5" rx="13" ry="9.3" transform="rotate(-8 1305 370.5)"/>
<path d="M1240.3 365.6C1241.4 364.8 1241.0 363.7 1243.7 363.3C1246.4 362.9 1246.0 362.6 1248.3 364.5C1250.6 366.4 1249.6 365.6 1250.6 369.0C1251.6 372.4 1251.6 371.4 1251.2 374.8C1250.8 378.2 1251.5 377.4 1249.4 379.3C1247.3 381.2 1247.0 379.7 1244.9 380.5C1242.8 381.3 1243.7 381.2 1243.1 381.6" stroke-width="1.6"/>
<path d="M1245.9 400.0C1245.7 402.3 1246.3 401.9 1245.3 406.9C1244.3 411.9 1244.0 409.9 1243.0 414.9C1242.0 419.9 1242.0 418.6 1242.4 421.8C1242.8 425.0 1242.0 424.2 1244.1 424.6C1246.2 425.0 1245.6 424.6 1248.7 422.9C1251.8 421.2 1250.2 421.4 1253.3 419.5C1256.4 417.6 1256.0 417.2 1257.9 417.2C1259.8 417.2 1259.0 416.5 1259.0 419.5C1259.0 422.5 1259.0 421.3 1257.9 426.3C1256.8 431.3 1256.7 429.0 1255.6 434.4C1254.5 439.8 1255.1 437.1 1254.5 442.4C1253.9 447.7 1254.3 445.4 1253.9 450.4C1253.5 455.4 1253.5 455.0 1253.3 457.3" stroke-width="1.6"/>
<path d="M1251.0 441.2C1248.7 442.7 1249.4 442.7 1244.1 445.8C1238.8 448.9 1241.1 447.3 1235.0 450.4C1228.9 453.5 1231.5 452.5 1225.8 455.0C1220.1 457.5 1222.0 457.4 1217.8 457.8C1213.6 458.2 1215.3 458.2 1213.2 456.1C1211.1 454.0 1211.1 454.5 1211.5 451.5C1211.9 448.5 1211.2 450.0 1214.4 447.0C1217.6 444.0 1215.9 446.6 1221.2 442.4C1226.5 438.2 1225.0 439.8 1230.4 434.4C1235.8 429.0 1233.9 431.3 1237.3 426.3C1240.7 421.3 1239.0 424.4 1240.7 419.5C1242.4 414.6 1242.0 416.1 1242.4 411.5C1242.8 406.9 1242.5 409.5 1241.9 405.7C1241.3 401.9 1241.1 401.9 1240.7 400.0" stroke-width="1.6"/>
<path d="M1251.0 441.2C1251.6 443.8 1252.3 444.1 1252.8 449.0C1253.3 453.9 1253.2 451.7 1252.6 456.0C1252.0 460.3 1251.5 459.9 1251.0 461.9" stroke-width="1.4"/>
<path d="M1253.3 457.3C1252.5 458.8 1253.5 458.5 1251.0 461.9C1248.5 465.3 1249.7 466.7 1245.9 467.6C1242.1 468.5 1244.4 465.7 1239.6 464.7C1234.8 463.7 1235.7 463.4 1231.5 464.7C1227.3 466.0 1228.7 465.1 1227.0 468.7C1225.3 472.3 1225.6 471.0 1226.4 475.6C1227.2 480.2 1226.4 478.3 1229.3 482.5C1232.2 486.7 1230.4 485.5 1235.0 488.2C1239.6 490.9 1237.7 490.5 1243.0 490.5C1248.3 490.5 1246.0 489.3 1251.0 488.2C1256.0 487.1 1254.5 489.0 1257.9 487.1C1261.3 485.2 1260.5 485.6 1261.3 482.5C1262.1 479.4 1262.1 481.0 1260.2 477.9C1258.3 474.8 1257.9 476.7 1255.6 473.3C1253.3 469.9 1253.7 471.8 1253.3 467.6C1252.9 463.4 1253.4 464.5 1254.5 460.7C1255.6 456.9 1256.0 457.6 1256.7 456.1" stroke-width="1.6"/>
<path d="M1256.7 456.1C1257.9 454.2 1256.7 454.2 1260.2 450.4C1263.7 446.6 1262.5 448.1 1267.1 444.7C1271.7 441.3 1269.7 443.5 1273.9 440.1C1278.1 436.7 1276.6 437.8 1279.7 434.4C1282.8 431.0 1281.6 432.5 1283.1 429.8C1284.6 427.1 1282.7 431.3 1284.2 426.3C1285.7 421.3 1286.5 418.7 1287.7 414.9" stroke-width="1.6"/>
<path d="M1251.0 461.9C1253.2 459.1 1253.0 458.3 1257.5 453.5C1262.0 448.7 1260.0 451.0 1264.5 447.5C1269.0 444.0 1268.8 444.5 1271.0 443.0" stroke-width="1.4"/>
<path d="M1238.8 330.0C1239.2 334.2 1238.3 335.0 1240.0 342.5C1241.7 350.0 1242.5 349.2 1243.8 352.5" stroke-width="1.1" opacity="0"/>
</g>
<g stroke="none">
<path d="M1332 422 q6 -5 12 0 q3 6 2 12 q8 2 12 8 q6 10 6 24 q4 14 8 28 q4 16 6 34 l-8 4 q-4 -20 -8 -36 q-4 -16 -8 -30 q-6 -12 -14 -22 q-6 -10 -8 -22z" fill="#9af2ee"/>
<path d="M1353.5 440.5C1348.0 440.3 1349.3 440.2 1346.0 443.0C1342.7 445.8 1343.5 445.0 1343.5 449.0C1343.5 453.0 1343.7 451.8 1346.0 455.0C1348.3 458.2 1349.8 455.8 1350.5 458.5C1351.2 461.2 1350.2 459.8 1348.0 463.0C1345.8 466.2 1345.3 462.3 1344.0 468.0C1342.7 473.7 1343.2 470.2 1344.0 480.0C1344.8 489.8 1346.1 487.5 1346.5 497.5C1346.9 507.5 1344.0 500.8 1345.2 510.0C1346.5 519.2 1347.3 515.0 1350.2 525.0C1353.2 535.0 1351.9 530.8 1354.0 540.0C1356.1 549.2 1356.5 544.2 1356.5 552.5C1356.5 560.8 1353.2 557.5 1354.0 565.0C1354.8 572.5 1356.1 566.7 1359.0 575.0C1361.9 583.3 1360.2 580.0 1362.8 590.0C1365.2 600.0 1366.5 595.8 1366.5 605.0C1366.5 614.2 1361.9 610.0 1362.8 617.5C1363.6 625.0 1365.2 620.0 1369.0 627.5C1372.8 635.0 1371.5 632.5 1374.0 640.0C1376.5 647.5 1373.2 643.3 1376.5 650.0C1379.8 656.7 1379.8 653.3 1384.0 660.0C1388.2 666.7 1384.8 665.4 1389.0 670.0C1393.2 674.6 1391.5 672.9 1396.5 673.8C1401.5 674.6 1400.7 675.4 1404.0 672.5C1407.3 669.6 1403.6 668.3 1406.5 665.0C1409.4 661.7 1411.1 667.5 1412.8 662.5C1414.4 657.5 1412.8 658.3 1411.5 650.0C1410.2 641.7 1410.2 645.8 1409.0 637.5C1407.8 629.2 1408.6 633.3 1407.8 625.0C1406.9 616.7 1407.8 620.8 1406.5 612.5C1405.2 604.2 1404.8 608.3 1404.0 600.0C1403.2 591.7 1405.7 595.8 1404.0 587.5C1402.3 579.2 1401.1 583.3 1399.0 575.0C1396.9 566.7 1400.2 570.8 1397.8 562.5C1395.2 554.2 1396.1 557.5 1391.5 550.0C1386.9 542.5 1388.2 546.7 1384.0 540.0C1379.8 533.3 1382.3 535.8 1379.0 530.0C1375.7 524.2 1376.5 528.3 1374.0 522.5C1371.5 516.7 1372.8 520.8 1371.5 512.5C1370.2 504.2 1371.9 506.7 1370.2 497.5C1368.6 488.3 1368.4 493.3 1366.5 485.0C1364.6 476.7 1365.3 480.2 1364.5 472.5C1363.7 464.8 1364.7 467.2 1364.0 462.0C1363.3 456.8 1362.2 461.0 1362.5 457.0C1362.8 453.0 1365.0 454.5 1365.0 450.0C1365.0 445.5 1366.3 446.7 1362.5 443.5C1358.7 440.3 1359.0 440.7 1353.5 440.5Z" fill="#2a1fd6"/>
<ellipse cx="1379" cy="547.5" rx="4.5" ry="32" fill="none" stroke="#9db4f0" stroke-width=".7" stroke-dasharray="1 1.2" transform="rotate(-6 1379 547.5)"/>
<ellipse cx="1356.5" cy="518.5" rx="11.2" ry="35.5" fill="#f0881a" transform="rotate(-7 1356.5 518.5)"/>
<ellipse cx="1373.7" cy="457.5" rx="3.8" ry="13.5" fill="#62e028" transform="rotate(6 1373.7 457.5)"/>
<ellipse cx="1380" cy="463" rx="3.2" ry="9" fill="#3a74e0" transform="rotate(14 1380 463)"/>
<ellipse cx="1387.3" cy="464" rx="3.8" ry="14" fill="#68b8e6" transform="rotate(-4 1387.3 464)"/>
<ellipse cx="1384.8" cy="489.8" rx="3.4" ry="9" fill="#4a92cc"/>
<circle cx="1391.8" cy="498.6" r="3.2" fill="#b01c1c"/><circle cx="1398.5" cy="502.5" r="3" fill="#b01c1c"/><circle cx="1404" cy="507.5" r="3.2" fill="#b01c1c"/>
<ellipse cx="1391.5" cy="518" rx="7.6" ry="14.2" fill="#2f8c58"/>
<ellipse cx="1412.8" cy="621" rx="4.6" ry="17.5" fill="#e6409e" transform="rotate(-14 1412.8 621)"/>
<circle cx="1261.5" cy="379.4" r="5" fill="#e0207e"/>
<ellipse cx="1251.9" cy="392.5" rx="4.4" ry="6.1" fill="#2a1ad0"/>
<circle cx="1254.6" cy="404.4" r="4.4" fill="#e88a3c"/>
<ellipse cx="1256" cy="415.6" rx="5.6" ry="2.6" fill="#a41a1a"/>
<ellipse cx="1263.5" cy="398.8" rx="2.6" ry="1.8" fill="#3c3c3c" transform="rotate(35 1263.5 398.8)"/>
<path d="M1273.75 380 L1291.25 390" stroke="#f4f02a" stroke-width="9" stroke-linecap="round"/>
<circle cx="1273.75" cy="380" r="1.5" fill="#7a7a10"/><circle cx="1291.25" cy="390" r="1.5" fill="#7a7a10"/>
<path d="M1275.2 397.2 Q1274.6 392.6 1279.6 392.8 Q1284.5 394 1288.5 399.5 Q1292.5 404.5 1293.6 408.6 Q1292.6 410.4 1290.4 409.2 Q1285.5 406.5 1281.5 403.8 Q1276.5 400.8 1275.2 397.2Z" fill="#6c1414"/>
<circle cx="1278.5" cy="425.6" r="3.6" fill="#34d44c"/><circle cx="1278.5" cy="425.6" r="1" fill="#1a7a2a"/>
<circle cx="1288.5" cy="423.75" r="5.4" fill="#e01c1c"/>
<ellipse cx="1270.6" cy="438.1" rx="7" ry="3.4" fill="#3c7ad2" transform="rotate(-35 1270.6 438.1)"/>
<circle cx="1338" cy="428.75" r="2.6" fill="#8a5a1a" stroke="#f0e020" stroke-width="1.6"/>
<ellipse cx="1335.6" cy="439.4" rx="2" ry="3.4" fill="#8a9aa0" stroke="#101010" stroke-width="1.6" transform="rotate(15 1335.6 439.4)"/>
<circle cx="1246.25" cy="371.25" r="1.5" fill="#1a1a14"/>
<circle cx="1396.9" cy="398.1" r="1.5" fill="#1a1a14"/>
<circle cx="1243.5" cy="478" r="1.5" fill="#1a1a14"/>
</g>
<g fill="none" stroke-width="1.7" stroke-dasharray="3.4 2.4">
<path d="M1287.5 139L1273.9 379" stroke="#a6a22a"/>
<path d="M1270.5 184L1263.6 397" stroke="#1a1a1a"/>
<path d="M1327 212L1264.5 396.5" stroke="#1a1a1a"/>
<path d="M1341 232L1283.75 392.5" stroke="#1a1a1a"/>
<path d="M1357.25 248.75L1291.25 390" stroke="#a6a22a"/>
<path d="M1408.5 273.75L1339 427" stroke="#a6a22a"/>
<path d="M1427 289L1345.5 434" stroke="#70705a"/>
<path d="M1477 313.75L1396.9 398.1" stroke="#1a1a1a"/>
<path d="M1532 331.25L1348 437.5" stroke="#25442a"/>
<path d="M1486 379L1375 455" stroke="#8a9a20"/>
<path d="M1499.5 395.75L1380 462" stroke="#22304e"/>
<path d="M1530.75 410.75L1387.5 465" stroke="#24404e"/>
<path d="M1535.75 434.5L1385.5 490" stroke="#25442a"/>
<path d="M1417.5 486.3L1392.5 498.5" stroke="#7a1a1a"/>
<path d="M1424 501.5L1399 502.5" stroke="#7a1a1a"/>
<path d="M1424 514.5L1405 508" stroke="#7a1a1a"/>
<path d="M1392.75 518L1659 565" stroke="#25442a"/>
<path d="M1414 621.25L1581.5 656.25" stroke="#7a2040"/>
<path d="M1132.25 275L1260 378" stroke="#6a1a1a"/>
<path d="M1128.5 339.5L1246.25 371.25" stroke="#1a1a1a"/>
<path d="M1172 368L1250.5 391.5" stroke="#1a1a5a"/>
<path d="M1172 404L1253 404.4" stroke="#3a2a1a"/>
<path d="M1172 438L1255 416" stroke="#7a1a1a"/>
<path d="M1132 530.75L1243.5 478" stroke="#1a1a1a"/>
<path d="M1256.5 562L1270.3 439" stroke="#1a1a3a"/>
<path d="M1266 597L1278.3 427" stroke="#5a6a5a"/>
<path d="M1274.75 633L1288.3 426" stroke="#8a1a1a"/>
<path d="M1304 670L1356.5 518.75" stroke="#6a4a2a"/>
<path d="M1327.75 696.25L1379 615" stroke="#1a1a5a"/>
</g>
<g font-family="Liberation Sans, sans-serif" font-size="13" fill="#24241c" stroke="#24241c" stroke-width=".25">
<text x="1223" y="137" textLength="130.0" lengthAdjust="spacingAndGlyphs">perifornical area (PFA)</text>
<text x="1046" y="186" textLength="222.5" lengthAdjust="spacingAndGlyphs">dorsal subparaventricular zone (dSPZ)</text>
<text x="1308" y="208.75" textLength="225.2" lengthAdjust="spacingAndGlyphs">ventral subparaventricular zone (vSPZ)</text>
<text x="1342" y="233" textLength="197.0" lengthAdjust="spacingAndGlyphs">dorsomedial hypothalamus (DMH)</text>
<text x="1359" y="250.5" textLength="183.0" lengthAdjust="spacingAndGlyphs">lateral hypothalamic area (LHA)</text>
<text x="1411.5" y="272.75" textLength="166.8" lengthAdjust="spacingAndGlyphs">ventral tegmental area (VTA)</text>
<text x="1429.5" y="290" textLength="91.2" lengthAdjust="spacingAndGlyphs">substantia nigra</text>
<text x="1480.75" y="312.5" textLength="33.8" lengthAdjust="spacingAndGlyphs">pineal</text>
<text x="1534" y="334.5" textLength="64.2" lengthAdjust="spacingAndGlyphs">tegmentum</text>
<text x="1488.25" y="382" textLength="203.2" lengthAdjust="spacingAndGlyphs">laterodorsal tegmental nuclei (LDT)</text>
<text x="1504" y="397" textLength="250.5" lengthAdjust="spacingAndGlyphs">pedunculopontine tegmental nucleus (PPN)</text>
<text x="1533.25" y="414" textLength="278.2" lengthAdjust="spacingAndGlyphs">ventrolateral periaqueductal grey matter (vlPAG)</text>
<text x="1538.75" y="437.5" textLength="186.2" lengthAdjust="spacingAndGlyphs">lateral pontine tegmentum (LPT)</text>
<text x="1421.5" y="489.25" textLength="89.5" lengthAdjust="spacingAndGlyphs">locus coeruleus</text>
<text x="1427" y="503.5" textLength="144.5" lengthAdjust="spacingAndGlyphs">precoeruleus region (PC)</text>
<text x="1427" y="518.25" textLength="148.5" lengthAdjust="spacingAndGlyphs">parabrachial nucleus (PB)</text>
<text x="1663.25" y="567.5" textLength="235.8" lengthAdjust="spacingAndGlyphs">sublaterodorsal tegmental nucleus (SLD)</text>
<text x="1585.25" y="660" textLength="192.8" lengthAdjust="spacingAndGlyphs">nucleus of the solitary tract (NTS)</text>
<text x="956" y="277.5" textLength="173.8" lengthAdjust="spacingAndGlyphs">paraventricular nucleus (PVN)</text>
<text x="1011.75" y="342.5" textLength="116.2" lengthAdjust="spacingAndGlyphs">anterior commissure</text>
<text x="953.5" y="371" textLength="217.0" lengthAdjust="spacingAndGlyphs">ventrolateral preoptic nucleus (VLPO)</text>
<text x="1011.75" y="407" textLength="158.8" lengthAdjust="spacingAndGlyphs">medial preoptic area (MPO)</text>
<text x="989.25" y="442" textLength="181.2" lengthAdjust="spacingAndGlyphs">suprachiasmatic nucleus (SCN)</text>
<text x="1083.5" y="533.25" textLength="45.5" lengthAdjust="spacingAndGlyphs">pituitary</text>
<text x="1124.25" y="567.5" textLength="130.5" lengthAdjust="spacingAndGlyphs">arcuate nucleus (ARC)</text>
<text x="1071.75" y="602.5" textLength="191.8" lengthAdjust="spacingAndGlyphs">tuberomammillary nucleus (TMN)</text>
<text x="1174.75" y="637" textLength="97.5" lengthAdjust="spacingAndGlyphs">mammiliary body</text>
<text x="1221.5" y="672" textLength="80.0" lengthAdjust="spacingAndGlyphs">raphe nucleus</text>
<text x="1275.25" y="709.5" textLength="102.5" lengthAdjust="spacingAndGlyphs">reticular formation</text>
<path id="bfp" d="M1179.5 452 Q1211 436 1222 408 Q1229.5 384 1224 352" fill="none" stroke="none"/>
<g font-size="14.2" fill="#2a1e18" stroke="#f9e6dc" stroke-width="3.2" paint-order="stroke" stroke-linejoin="round" letter-spacing="1.0">
<text><textPath href="#bfp" startOffset="0">basal</textPath></text>
<text><textPath href="#bfp" startOffset="44">forebrain</textPath></text>
</g>
</g>
</svg><!--/BRAIN-->
<div id="bottombar" class="abs">
<div class="abs" style="left:1.5px;top:0.4px;width:191.5px;height:42.6px;border-radius:4px;background:linear-gradient(#fb9f72 0,#f9946a 45%,#f78a5e 100%);box-shadow:inset 0 0 0 1px #f4a383, 1px 1px 1px #b9a09a"></div>
<div class="abs" style="left:56.5px;top:8.7px;width:25.7px;height:26px;background:linear-gradient(#4d8fd0 0,#1d5aa6 40%,#0e3a80 100%);border:1px solid #0c2f66;box-shadow:0 0 0 .5px #5a6a90"></div>
<svg class="abs" style="left:65.6px;top:14.0px" width="10" height="15" viewBox="0 0 10 15"><path d="M1.2 0.3v13h7" stroke="#fff" stroke-width="2.5" fill="none"/></svg>
<div class="abs" style="left:87.0px;top:11.5px;font-size:20.3px;line-height:23px;white-space:nowrap">Learn</div>
<div class="abs" style="left:195.3px;top:0.6px;width:142.8px;height:42.6px;border-radius:4px;background:linear-gradient(#e4e6ee 0,#d9dce7 50%,#cfd3e0 100%);box-shadow:inset 0 0 0 1px #c2c6d4, 1px 1px 1px #a9adbc"></div>
<svg class="abs" style="left:209.5px;top:7.5px" width="29" height="28" viewBox="0 0 29 28"><defs><linearGradient id="pg" x1="0" y1="0" x2="0" y2="1"><stop offset="0" stop-color="#b5e04a"/><stop offset="1" stop-color="#7fc01e"/></linearGradient></defs><path d="M10.5 1 h8 v9 h9.5 v8 h-9.5 v9.5 h-8 v-9.5 h-9.5 v-8 h9.5z" fill="url(#pg)" stroke="#86bf2a" stroke-width="1"/></svg>
<div class="abs" style="left:242.5px;top:11.5px;font-size:20.6px;line-height:23px;white-space:nowrap;word-spacing:1px">Add new</div>
<div class="abs" style="left:431.1px;top:-0.6px;width:26.5px;height:18.8px;background:#fa6e5a;text-align:center;white-space:nowrap;line-height:18.8px;font-size:13px;color:#7a0d2e"><span class="sx" style="transform:scaleX(1.0)">1%</span></div>
<div class="abs" style="left:457.6px;top:-0.6px;width:51.2px;height:18.8px;background:#fb8b7b;text-align:center;white-space:nowrap;line-height:18.8px;font-size:13px;color:#7a0d4e"><span class="sx" style="transform:scaleX(1.08)">(8,168)</span></div>
<div class="abs" style="left:530.1px;top:-0.6px;width:129.9px;height:18.8px;background:#ffff1e;text-align:center;white-space:nowrap;line-height:18.8px;font-size:13px;font-weight:bold;color:#1a1a00"><span class="sx" style="transform:scaleX(1.14)">5yr 5mth 27 days</span></div>
<div class="abs" style="left:660.0px;top:-0.6px;width:53.2px;height:18.8px;background:#1ef0f0;text-align:center;white-space:nowrap;line-height:18.8px;font-size:13px;font-weight:bold;color:#002020"><span class="sx" style="transform:scaleX(1.12)">2 reps</span></div>
<div class="abs" style="left:734.2px;top:-0.6px;width:98.5px;height:18.8px;background:#0505d2;text-align:center;white-space:nowrap;line-height:18.8px;font-size:13px;font-weight:bold;color:#fff"><span class="sx" style="transform:scaleX(1.18)">Oct 07, 2023</span></div>
<div class="abs" style="left:854.5px;top:-0.6px;width:44.5px;height:18.8px;background:#ffa6f6;text-align:center;white-space:nowrap;line-height:18.8px;font-size:10px;color:#30102a">70.9%</div>
<div class="abs" style="left:898.9px;top:-0.6px;width:94.8px;height:18.8px;background:#0a14e6;text-align:center;white-space:nowrap;line-height:18.8px;font-size:9.6px;color:#fff">74yr 2mth 10 days</div>
<div class="abs" style="left:341.4px;top:21.5px;width:64.8px;height:22px;background:linear-gradient(#eef0f4,#e9ebf0);border-radius:3px 3px 3px 3px;box-shadow:1px 1px 1px #b4b8c6"></div>
<div class="abs" style="left:364.2px;top:24.0px;font-size:14px;line-height:16px;color:#1c1c22;white-space:nowrap">Learn</div>
<div class="abs" style="left:407.6px;top:22.4px;width:52.8px;height:19.8px;background:linear-gradient(#dadde8,#d2d6e3);border-radius:2px 2px 4px 4px;box-shadow:1px 1px 0 #b6bacb"></div>
<div class="abs" style="left:430.8px;top:24.0px;font-size:14px;line-height:16px;color:#6f778b;white-space:nowrap">Edit</div>
<div class="abs" style="left:461.2px;top:22.4px;width:63.4px;height:19.8px;background:linear-gradient(#dadde8,#d2d6e3);border-radius:2px 2px 4px 4px;box-shadow:1px 1px 0 #b6bacb"></div>
<div class="abs" style="left:484.8px;top:24.0px;font-size:14px;line-height:16px;color:#6f778b;white-space:nowrap">Read</div>
<div class="abs" style="left:525.4px;top:22.4px;width:90.7px;height:19.8px;background:linear-gradient(#dadde8,#d2d6e3);border-radius:2px 2px 4px 4px;box-shadow:1px 1px 0 #b6bacb"></div>
<div class="abs" style="left:548.6px;top:24.0px;font-size:14px;line-height:16px;color:#6f778b;white-space:nowrap">Compose</div>
<div class="abs" style="left:616.9px;top:22.4px;width:63.1px;height:19.8px;background:linear-gradient(#dadde8,#d2d6e3);border-radius:2px 2px 4px 4px;box-shadow:1px 1px 0 #b6bacb"></div>
<div class="abs" style="left:640.2px;top:24.0px;font-size:14px;line-height:16px;color:#6f778b;white-space:nowrap">Tools</div>
<div class="abs" style="left:680.8px;top:22.4px;width:64.1px;height:19.8px;background:linear-gradient(#dadde8,#d2d6e3);border-radius:2px 2px 4px 4px;box-shadow:1px 1px 0 #b6bacb"></div>
<div class="abs" style="left:703.5px;top:24.0px;font-size:14px;line-height:16px;color:#6f778b;white-space:nowrap">Alarm</div>
<svg class="abs" style="left:342.5px;top:0.5px" width="15" height="16" viewBox="0 0 15 16"><rect x="0" y="0" width="15" height="16" rx="1.5" fill="#7ce628"/><path d="M2.5 3 h8.5 v3 h-2.6 v7.5 h-3.3 v-7.5 h-2.6z" fill="#fff" stroke="#1e2a10" stroke-width="1"/><path d="M10.5 8 l3 1.8 l-3 1.8z" fill="#1a5a1a"/></svg>
<svg class="abs" style="left:363.5px;top:1.0px" width="15" height="15" viewBox="0 0 15 15"><rect x=".8" y="2.2" width="11" height="11" rx="1.5" fill="#2ed62e" stroke="#0c5c1c" stroke-width="1.2"/><rect x="3.6" y=".6" width="5.4" height="3" rx="1" fill="#1a7a2a" stroke="#0c4c1c" stroke-width=".6"/><rect x="6.6" y="8.2" width="7.6" height="5.6" fill="#eef0fa" stroke="#3a3aa0" stroke-width="1.1"/><path d="M8 11h4.5" stroke="#3a3aa0" stroke-width="1"/></svg>
<svg class="abs" style="left:385.5px;top:1.2px" width="14" height="15" viewBox="0 0 14 15"><rect x=".7" y=".7" width="12.4" height="13.4" fill="#d8dce0" stroke="#2a2e36" stroke-width="1.4"/><path d="M2 3.2h10M2 5.6h10" stroke="#50565e" stroke-width="1"/><rect x="2.2" y="7.2" width="9.6" height="6" fill="#1e6e3a"/><path d="M6.5 9.6h4.5" stroke="#bfe6c8" stroke-width="1"/></svg>
<svg class="abs" style="left:405.5px;top:3.5px" width="15" height="9.5" viewBox="0 0 15 9.5"><rect x="0" y="0" width="15" height="9.5" fill="#ffe820"/><path d="M3.6 1.4h-2v6.6h2M11.4 1.4h2v6.6h-2" stroke="#e86a10" stroke-width="1.3" fill="none"/><path d="M4.6 6.6h1.2M6.9 6.6h1.2M9.2 6.6h1.2" stroke="#e86a10" stroke-width="1.3"/></svg>
<div class="abs" style="left:424.5px;top:2px;width:1px;height:15px;background:#c5c8d4"></div>
<svg class="abs" style="left:512.5px;top:1.3px" width="15" height="15" viewBox="0 0 15 15"><rect x=".8" y=".8" width="13.4" height="13.4" fill="#f4ca32" stroke="#1a1a14" stroke-width="1.5"/><path d="M7.5 2.6 a2.9 2.9 0 0 1 1.6 5.3 v1.2 h-3.2 v-1.2 a2.9 2.9 0 0 1 1.6 -5.3z" fill="#fff4b8" stroke="#3a3210" stroke-width=".8"/><path d="M6.4 10.4h2.2M6.8 11.8h1.4" stroke="#3a3210" stroke-width=".9"/></svg>
<svg class="abs" style="left:716.0px;top:1.5px" width="15" height="15" viewBox="0 0 15 15"><rect x=".7" y=".7" width="13.6" height="13.2" fill="#a9b2c0" stroke="#1e2228" stroke-width="1.4"/><rect x=".7" y=".7" width="13.6" height="3" fill="#1e2228"/><rect x="3.4" y="5.6" width="8.2" height="6" fill="#dfe6f0" stroke="#2a3038" stroke-width="1"/><path d="M4.5 8.6h6" stroke="#5a6a80" stroke-width="1.2"/></svg>
<svg class="abs" style="left:836.0px;top:1.3px" width="14.5" height="15" viewBox="0 0 14.5 15"><rect x=".7" y="1.6" width="13" height="12.6" fill="#fdfdfd" stroke="#4a4a4a" stroke-width="1.1"/><rect x=".7" y="1.6" width="13" height="3" fill="#c8302a"/><path d="M3.5 0v3M7.2 0v3M11 0v3" stroke="#444" stroke-width="1"/><text x="7.2" y="12.4" text-anchor="middle" font-family="Liberation Sans" font-weight="bold" font-size="7.5" fill="#222">17</text></svg>
<svg class="abs" style="left:997.5px;top:1.5px" width="14" height="14" viewBox="0 0 14 14"><rect x=".5" y=".5" width="13" height="13" rx="2" fill="#d81818" stroke="#a80c0c" stroke-width=".8"/><rect x="1.5" y="1.3" width="11" height="5" rx="1.5" fill="#f05a5a" opacity=".6"/><path d="M4.2 4.2l5.6 5.6M9.8 4.2l-5.6 5.6" stroke="#fff" stroke-width="2.2"/></svg>
<svg class="abs" style="left:1018.0px;top:1.3px" width="15" height="15" viewBox="0 0 15 15"><rect x=".7" y=".7" width="13.6" height="13.2" rx="1.5" fill="#cfe4f6" stroke="#5aa0d8" stroke-width="1.3"/><rect x="1.4" y="1.4" width="12.2" height="3" fill="#6ab0e4"/><rect x="2.6" y="7" width="3.8" height="4.4" fill="#fff" stroke="#5aa0d8" stroke-width=".9"/><rect x="8" y="7.6" width="4.6" height="3.2" fill="#f0f4f8" stroke="#a0a8b0" stroke-width=".7"/></svg>
<svg class="abs" style="left:1039.0px;top:0.8px" width="16" height="16" viewBox="0 0 16 16"><text x="7" y="14" text-anchor="middle" font-family="Liberation Serif" font-weight="bold" font-size="18" fill="#c01818">T</text><text x="9.2" y="14.6" text-anchor="middle" font-family="Liberation Serif" font-weight="bold" font-size="15" fill="#141414">T</text></svg>
<svg class="abs" style="left:1060.3px;top:1.0px" width="15" height="15" viewBox="0 0 15 15"><rect x=".5" y=".5" width="14" height="14" rx="3.5" fill="#d8581a" stroke="#a83c0c" stroke-width=".8"/><rect x="1.5" y="1.2" width="12" height="5.5" rx="2.5" fill="#f08a4a" opacity=".6"/><text x="7.5" y="10" text-anchor="middle" font-family="Liberation Sans" font-weight="bold" font-size="6.5" fill="#fff">mw</text></svg>
<svg class="abs" style="left:1081.3px;top:1.0px" width="15" height="15" viewBox="0 0 15 15"><circle cx="7.5" cy="7.5" r="6" fill="none" stroke="#2a6ad0" stroke-width="2"/><rect x="3.6" y="3.6" width="7.8" height="7.8" rx="1" fill="#b8d4f0" stroke="#4a88d8" stroke-width=".8"/><path d="M7.5 .3l1.6 2h-3.2zM7.5 14.7l1.6-2h-3.2zM.3 7.5l2-1.6v3.2zM14.7 7.5l-2-1.6v3.2z" fill="#2a6ad0"/></svg>
<div class="abs" style="left:1099.8px;top:2px;width:1px;height:15px;background:#c0c3d0"></div>
<svg class="abs" style="left:1110.5px;top:1.0px" width="14" height="15" viewBox="0 0 14 15"><path d="M3.8 1 h6.4 l2.8 2.8 v9.6 h-9.2z" fill="#f6f0dc" stroke="#c9c2a8" stroke-width=".8"/><path d="M1.2 3 h6 l2.6 2.6 v8.6 h-8.6z" fill="#faf6e6" stroke="#cfc8ae" stroke-width=".8"/></svg>
<svg class="abs" style="left:1131.0px;top:1.0px" width="15.5" height="15" viewBox="0 0 15.5 15"><rect x=".7" y=".7" width="7.6" height="9" fill="#e8ecf4" stroke="#1c2a4a" stroke-width="1.2"/><path d="M2.2 3.2h4.4M2.2 5.2h4.4M2.2 7.2h3" stroke="#3a4a6a" stroke-width=".8"/><rect x="6.4" y="4.8" width="8" height="9.4" fill="#e8ecf4" stroke="#1c2a4a" stroke-width="1.2"/><path d="M8 7.6h4.8M8 9.6h4.8M8 11.6h3.4" stroke="#3a4a6a" stroke-width=".8"/></svg>
<svg class="abs" style="left:1152.5px;top:0.8px" width="15.5" height="15.5" viewBox="0 0 15.5 15.5"><rect x=".8" y="2.2" width="12.6" height="12.4" rx="1.2" fill="#c89a5a" stroke="#7a5a2a" stroke-width="1"/><rect x="4.2" y=".6" width="6" height="3.2" rx="1" fill="#6a6a72" stroke="#3a3a40" stroke-width=".6"/><path d="M3.2 5 h8.2 v6.2 l-2.4 2.4 h-5.8z" fill="#ecebf8" stroke="#9a98b8" stroke-width=".6"/></svg>
<div class="abs" style="left:1170.3px;top:2px;width:1px;height:15px;background:#c0c3d0"></div>
<svg class="abs" style="left:1179.5px;top:1.0px" width="14.5" height="15" viewBox="0 0 14.5 15"><path d="M4.4 1h6.2l2.8 2.8v10h-9z" fill="#e4eef8" stroke="#a8c6e6" stroke-width="1"/><path d="M.8 7.8h5.4M4.4 5.6l2.4 2.2-2.4 2.2" stroke="#9cc0e8" stroke-width="1.3" fill="none"/></svg>
<svg class="abs" style="left:1201.0px;top:0.8px" width="15.5" height="15.5" viewBox="0 0 15.5 15.5"><rect x=".8" y=".8" width="11.4" height="12.8" fill="#4a90d8" stroke="#2a68b0" stroke-width=".9"/><rect x="2" y="2" width="9" height="2.4" fill="#cfe2f6"/><path d="M2.4 6.6h7M2.4 8.8h5" stroke="#cfe2f6" stroke-width="1"/><path d="M13.6 5.2 l1.5 1.5 l-6.2 6.6 l-2.4 .9 l.8 -2.4z" fill="#f0a830" stroke="#a86a10" stroke-width=".6"/></svg>
<svg class="abs" style="left:1222.5px;top:1.0px" width="15" height="15" viewBox="0 0 15 15"><circle cx="7.5" cy="7.5" r="7" fill="#a0105a"/><ellipse cx="7.5" cy="4.4" rx="5" ry="3.1" fill="#d02a7c" opacity=".75"/><text x="7.5" y="12" text-anchor="middle" font-family="Liberation Sans" font-weight="bold" font-size="12" fill="#fff">?</text></svg>
<svg class="abs" style="left:343.6px;top:25.2px" width="14.4" height="14.2" viewBox="0 0 14.4 14.2"><rect width="14.4" height="14.2" fill="#0a0ad2"/><path d="M4.4 2.8v8.2h6" stroke="#fff" stroke-width="2.4" fill="none"/></svg>
<svg class="abs" style="left:410.0px;top:24.6px" width="14" height="13.6" viewBox="0 0 14 13.6"><rect width="14" height="13.6" fill="#fafbfd"/><text x="7" y="12.3" text-anchor="middle" font-family="Liberation Serif" font-weight="bold" font-size="15.5" fill="#5a86b0">A</text></svg>
<svg class="abs" style="left:462.8px;top:23.5px" width="15.5" height="15.5" viewBox="0 0 15.5 15.5"><path d="M1 3.6 L8.4 .8 L14.6 8 L14.2 10.6 L6.6 14.6 L3.2 9.2z" fill="#1e78d8" stroke="#0c3a8a" stroke-width=".9"/><path d="M3.4 9.2 L6.8 13.6 L14 9.8 L13.8 8.4 L6.6 12z" fill="#f4f0c0" stroke="#0c3a8a" stroke-width=".6"/><path d="M1.2 3.8 L8.2 1.2 L13.8 7.8 L6.4 11.4z" fill="#3a92ec"/></svg>
<svg class="abs" style="left:527.8px;top:24.0px" width="15" height="14.5" viewBox="0 0 15 14.5"><path d="M4 4.2 L9.4 2 L14.2 4.2 L14.2 10.4 L9 13.8 L4 11.2z" fill="#8ed03a" stroke="#5a9a1a" stroke-width=".8"/><path d="M4 4.2 L9 6.4 L14.2 4.2M9 6.4 V13.8" stroke="#5a9a1a" stroke-width=".7" fill="none"/><path d="M4 4.2 L9 6.4 V13.8 L4 11.2z" fill="#a6e04e"/><rect x=".6" y="1" width="5" height="5" rx="1" fill="#f4c23a" stroke="#d09a1a" stroke-width=".5"/></svg>
<svg class="abs" style="left:618.3px;top:24.2px" width="15.5" height="15" viewBox="0 0 15.5 15"><path d="M1.4 1.4 a3.4 3.4 0 0 1 4.8 3.6 l8 7.4 l-1.8 2 l-8 -7.2 a3.4 3.4 0 0 1 -4 -3.6 l2.2 1.8 l1.6 -1.6z" fill="#8a8e98" stroke="#5c6068" stroke-width=".7"/></svg>
<svg class="abs" style="left:682.8px;top:24.6px" width="15" height="14.5" viewBox="0 0 15 14.5"><circle cx="7.5" cy="7.8" r="5" fill="#f4f6fa" stroke="#50545e" stroke-width="1.4"/><path d="M1.6 3.6 a2.4 2.4 0 0 1 3.4 -2.4zM13.4 3.6 a2.4 2.4 0 0 0 -3.4 -2.4z" fill="#50545e" stroke="#50545e" stroke-width=".8"/><path d="M3.6 12 l-1.4 1.8M11.4 12 l1.4 1.8" stroke="#50545e" stroke-width="1.2"/><path d="M7.5 5v3h2" stroke="#8a8e98" stroke-width=".8" fill="none"/></svg>
</div>
</body>
</html>
